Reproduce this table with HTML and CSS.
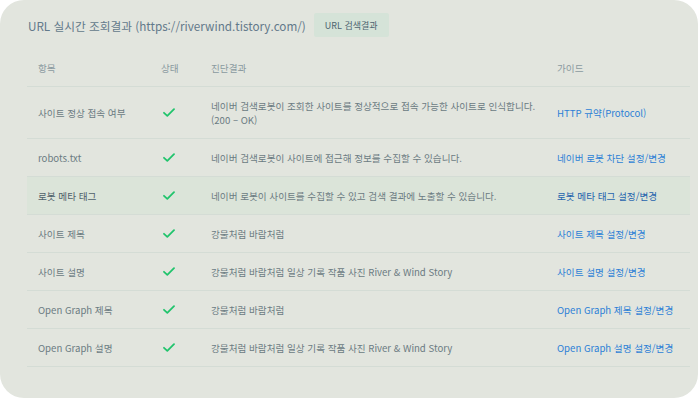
FILE: index.html
```html
<!DOCTYPE html>
<html lang="ko">
<head>
<meta charset="utf-8">
<link rel="stylesheet" href="styles.css">
</head>
<body>
<div class="card">
  <div class="head">
    <h1 class="title">URL 실시간 조회결과 (https://riverwind.tistory.com/)</h1>
    <span class="badge">URL 검색결과</span>
  </div>
  <table class="result">
    <colgroup>
      <col class="c1"><col class="c2"><col class="c3"><col class="c4">
    </colgroup>
    <thead>
      <tr><th>항목</th><th>상태</th><th>진단결과</th><th>가이드</th></tr>
    </thead>
    <tbody>
      <tr class="tall">
        <td>사이트 정상 접속 여부</td>
        <td><svg class="ok" viewBox="0 0 12 9" width="12" height="9"><path d="M1 4.8 L4.3 7.8 L11 1.2"/></svg></td>
        <td>네이버 검색로봇이 조회한 사이트를 정상적으로 접속 가능한 사이트로 인식합니다.<br>(200 – OK)</td>
        <td><a class="link">HTTP 규약(Protocol)</a></td>
      </tr>
      <tr>
        <td>robots.txt</td>
        <td><svg class="ok" viewBox="0 0 12 9" width="12" height="9"><path d="M1 4.8 L4.3 7.8 L11 1.2"/></svg></td>
        <td>네이버 검색로봇이 사이트에 접근해 정보를 수집할 수 있습니다.</td>
        <td><a class="link">네이버 로봇 차단 설정/변경</a></td>
      </tr>
      <tr class="active">
        <td>로봇 메타 태그</td>
        <td><svg class="ok" viewBox="0 0 12 9" width="12" height="9"><path d="M1 4.8 L4.3 7.8 L11 1.2"/></svg></td>
        <td>네이버 로봇이 사이트를 수집할 수 있고 검색 결과에 노출할 수 있습니다.</td>
        <td><a class="link">로봇 메타 태그 설정/변경</a></td>
      </tr>
      <tr>
        <td>사이트 제목</td>
        <td><svg class="ok" viewBox="0 0 12 9" width="12" height="9"><path d="M1 4.8 L4.3 7.8 L11 1.2"/></svg></td>
        <td>강물처럼 바람처럼</td>
        <td><a class="link">사이트 제목 설정/변경</a></td>
      </tr>
      <tr>
        <td>사이트 설명</td>
        <td><svg class="ok" viewBox="0 0 12 9" width="12" height="9"><path d="M1 4.8 L4.3 7.8 L11 1.2"/></svg></td>
        <td>강물처럼 바람처럼 일상 기록 작품 사진 River &amp; Wind Story</td>
        <td><a class="link">사이트 설명 설정/변경</a></td>
      </tr>
      <tr>
        <td>Open Graph 제목</td>
        <td><svg class="ok" viewBox="0 0 12 9" width="12" height="9"><path d="M1 4.8 L4.3 7.8 L11 1.2"/></svg></td>
        <td>강물처럼 바람처럼</td>
        <td><a class="link">Open Graph 제목 설정/변경</a></td>
      </tr>
      <tr>
        <td>Open Graph 설명</td>
        <td><svg class="ok" viewBox="0 0 12 9" width="12" height="9"><path d="M1 4.8 L4.3 7.8 L11 1.2"/></svg></td>
        <td>강물처럼 바람처럼 일상 기록 작품 사진 River &amp; Wind Story</td>
        <td><a class="link">Open Graph 설명 설정/변경</a></td>
      </tr>
    </tbody>
  </table>
</div>
</body>
</html>
```

FILE: styles.css
```css
html, body {
  margin: 0;
  padding: 0;
  background: #ffffff;
}
body {
  font-family: "Noto Sans CJK KR", "Noto Sans", sans-serif;
  color: #6b7b82;
}
.card {
  width: 698px;
  height: 398px;
  box-sizing: border-box;
  background: #e2e5de;
  border-radius: 24px;
  padding: 13px 8px 0 27px;
}
.head {
  display: flex;
  align-items: center;
  gap: 8px;
  height: 24px;
  padding-left: 1px;
}
.title {
  margin: 0;
  font-size: 11.7px;
  font-weight: 400;
  color: #62798a;
}
.badge {
  display: flex;
  align-items: center;
  height: 24px;
  padding: 0 11px;
  background: #d5e3d8;
  border-radius: 2px;
  font-size: 9px;
  color: #4d6470;
}
.result {
  margin-top: 12px;
  width: 663px;
  table-layout: fixed;
  border-collapse: collapse;
  font-size: 9.6px;
}
.c1 { width: 124px; }
.c2 { width: 49px; }
.c3 { width: 346px; }
.c4 { width: 144px; }
.result th {
  height: 37px;
  font-weight: 400;
  text-align: left;
  color: #8a9aa0;
  padding: 0 0 0 11px;
  border-bottom: 1px solid #d4dcd5;
}
.result th:nth-child(2),
.result td:nth-child(2) {
  padding-left: 10px;
}
.result td {
  height: 37px;
  padding: 0 0 0 11px;
  border-bottom: 1px solid #d4dcd5;
  line-height: 14px;
  vertical-align: middle;
  white-space: nowrap;
}
.result tr.tall td {
  height: 51px;
}
.result tr.active td {
  background: #dbe4d9;
}
.result tr.active td:first-child {
  color: #4f6069;
}
.ok {
  display: block;
  margin-left: 2px;
  fill: none;
  stroke: #20c46c;
  stroke-width: 1.8;
  stroke-linecap: round;
  stroke-linejoin: round;
}
.link {
  color: #2c7fd6;
  text-decoration: none;
}
.active .link {
  color: #1f63ad;
}
```
